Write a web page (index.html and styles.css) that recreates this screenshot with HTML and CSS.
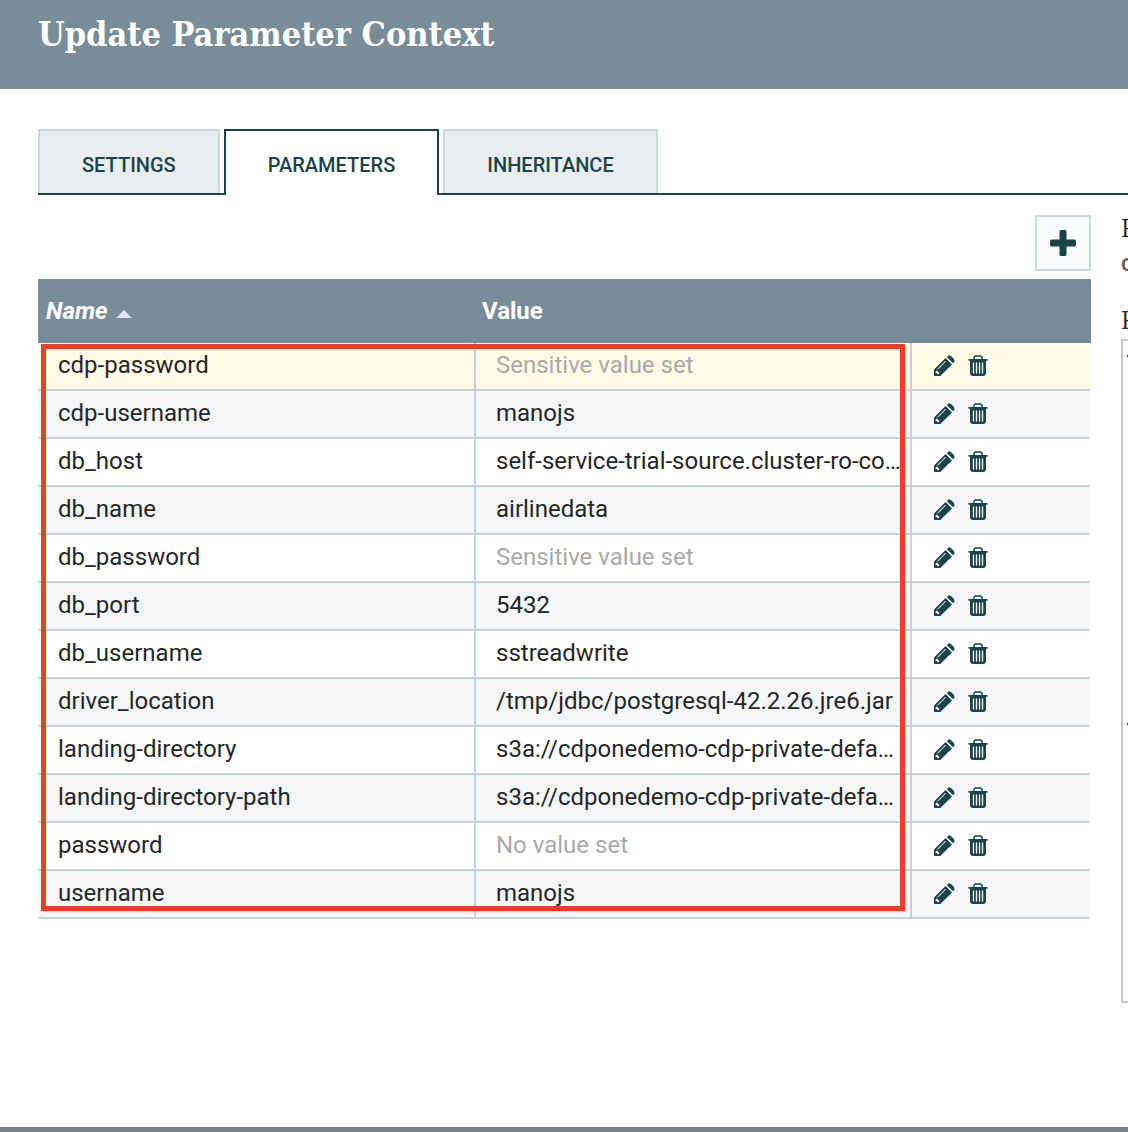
FILE: index.html
```html
<!DOCTYPE html>
<html lang="en">
<head>
<meta charset="utf-8">
<title>Update Parameter Context</title>
<link rel="stylesheet" href="styles.css">
</head>
<body>
<svg class="sprite" aria-hidden="true">
  <symbol id="pencil" viewBox="0 0 22 22">
    <path fill-rule="evenodd" d="M1 21V14.600L12.600 3 19 9.400 7.400 21ZM2.700 16.600V17.900H4.100V19.300H5.400L6.600 18.100 3.900 15.400ZM4.900 14.600 12.900 6.600 12.200 5.900 4.200 13.900Z" fill="#1b4448"/>
    <path d="M13.700 1.900 14.800 .9Q16.500-.4 18.200 1.200L20.800 3.800Q22.300 5.500 20.900 7.200L20 8.200Z" fill="#1b4448"/>
  </symbol>
  <symbol id="trash" viewBox="0 0 20 22">
    <path d="M6 4.500V3Q6 1 8 1H12Q14 1 14 3V4.500" fill="none" stroke="#1b4448" stroke-width="1.500"/>
    <path d="M.5 4H19.500V5.700H18V18Q18 21 15 21H5Q2 21 2 18V5.700H.5Z" fill="#1b4448"/>
    <path d="M5.500 7.500V18.500M8.500 7.500V18.500M11.500 7.500V18.500M14.500 7.500V18.500" stroke="#fff" stroke-width="1.300"/>
  </symbol>
</svg>
<div class="dialog">
  <header class="dialog-header"><h1>Update Parameter Context</h1></header>
  <div class="tabs" role="tablist">
    <button class="tab" role="tab">SETTINGS</button>
    <button class="tab tab-active" role="tab" aria-selected="true">PARAMETERS</button>
    <button class="tab" role="tab">INHERITANCE</button>
  </div>
  <main class="content">
    <section class="parameters">
      <div class="toolbar">
        <button class="add" aria-label="Add parameter"><svg viewBox="0 0 26 26" width="26" height="26"><path d="M11 0H15Q16.500 0 16.500 1.500V9.500H24.500Q26 9.500 26 11V15Q26 16.500 24.500 16.500H16.500V24.500Q16.500 26 15 26H11Q9.500 26 9.500 24.500V16.500H1.500Q0 16.500 0 15V11Q0 9.500 1.500 9.500H9.500V1.500Q9.500 0 11 0Z" fill="#1b4448"/></svg></button>
      </div>
      <div class="grid">
        <table>
          <colgroup><col class="col-name"><col class="col-value"><col></colgroup>
          <thead><tr><th class="sorted">Name<span class="sort-arrow"></span></th><th>Value</th><th></th></tr></thead>
          <tbody>
            <tr class="selected"><td>cdp-password</td><td class="unset">Sensitive value set</td><td class="actions"><button aria-label="Edit"><svg class="icon-edit"><use href="#pencil"/></svg></button><button aria-label="Delete"><svg class="icon-delete"><use href="#trash"/></svg></button></td></tr>
            <tr><td>cdp-username</td><td>manojs</td><td class="actions"><button aria-label="Edit"><svg class="icon-edit"><use href="#pencil"/></svg></button><button aria-label="Delete"><svg class="icon-delete"><use href="#trash"/></svg></button></td></tr>
            <tr><td>db_host</td><td>self-service-trial-source.cluster-ro-co…</td><td class="actions"><button aria-label="Edit"><svg class="icon-edit"><use href="#pencil"/></svg></button><button aria-label="Delete"><svg class="icon-delete"><use href="#trash"/></svg></button></td></tr>
            <tr><td>db_name</td><td>airlinedata</td><td class="actions"><button aria-label="Edit"><svg class="icon-edit"><use href="#pencil"/></svg></button><button aria-label="Delete"><svg class="icon-delete"><use href="#trash"/></svg></button></td></tr>
            <tr><td>db_password</td><td class="unset">Sensitive value set</td><td class="actions"><button aria-label="Edit"><svg class="icon-edit"><use href="#pencil"/></svg></button><button aria-label="Delete"><svg class="icon-delete"><use href="#trash"/></svg></button></td></tr>
            <tr><td>db_port</td><td>5432</td><td class="actions"><button aria-label="Edit"><svg class="icon-edit"><use href="#pencil"/></svg></button><button aria-label="Delete"><svg class="icon-delete"><use href="#trash"/></svg></button></td></tr>
            <tr><td>db_username</td><td>sstreadwrite</td><td class="actions"><button aria-label="Edit"><svg class="icon-edit"><use href="#pencil"/></svg></button><button aria-label="Delete"><svg class="icon-delete"><use href="#trash"/></svg></button></td></tr>
            <tr><td>driver_location</td><td>/tmp/jdbc/postgresql-42.2.26.jre6.jar</td><td class="actions"><button aria-label="Edit"><svg class="icon-edit"><use href="#pencil"/></svg></button><button aria-label="Delete"><svg class="icon-delete"><use href="#trash"/></svg></button></td></tr>
            <tr><td>landing-directory</td><td>s3a://cdponedemo-cdp-private-defa…</td><td class="actions"><button aria-label="Edit"><svg class="icon-edit"><use href="#pencil"/></svg></button><button aria-label="Delete"><svg class="icon-delete"><use href="#trash"/></svg></button></td></tr>
            <tr><td>landing-directory-path</td><td>s3a://cdponedemo-cdp-private-defa…</td><td class="actions"><button aria-label="Edit"><svg class="icon-edit"><use href="#pencil"/></svg></button><button aria-label="Delete"><svg class="icon-delete"><use href="#trash"/></svg></button></td></tr>
            <tr><td>password</td><td class="unset">No value set</td><td class="actions"><button aria-label="Edit"><svg class="icon-edit"><use href="#pencil"/></svg></button><button aria-label="Delete"><svg class="icon-delete"><use href="#trash"/></svg></button></td></tr>
            <tr><td>username</td><td>manojs</td><td class="actions"><button aria-label="Edit"><svg class="icon-edit"><use href="#pencil"/></svg></button><button aria-label="Delete"><svg class="icon-delete"><use href="#trash"/></svg></button></td></tr>
          </tbody>
        </table>
        <div class="highlight"></div>
      </div>
    </section>
    <aside class="details">
      <div class="details-label">P</div>
      <div class="details-value">c</div>
      <div class="details-label details-next">R</div>
      <div class="references"><span class="twist"></span><span class="twist"></span></div>
    </aside>
  </main>
</div>
</body>
</html>
```
FILE: styles.css
```css
* { box-sizing: border-box; }
body {
  margin: 0;
  background: #728089;
  color: #262626;
  font-family: Roboto, "Liberation Sans", sans-serif;
  font-size: 24px;
  overflow: hidden;
}
button { font: inherit; cursor: pointer; }
.sprite { display: none; }
.dialog {
  min-height: calc(100vh - 5px);
  background: #fff;
  box-shadow: 0 0 4px rgba(0, 0, 0, 0.4);
}
.dialog-header {
  height: 89px;
  padding: 12px 38px;
  background: #798d99;
}
h1 {
  margin: 0;
  color: #fff;
  font: bold 34px/44px "Roboto Slab", "DejaVu Serif Condensed", "DejaVu Serif", serif;
  white-space: nowrap;
}
.tabs {
  display: flex;
  gap: 4px;
  margin: 40px 0 0 38px;
  border-bottom: 2px solid #1b4448;
}
.tab {
  height: 64px;
  padding: 6px 42px 0;
  border: 2px solid #ccdadb;
  border-bottom: 0;
  background: #e9edf0;
  color: #1b4448;
  font-size: 20px;
  font-weight: 500;
}
.tab-active {
  height: 66px;
  margin-bottom: -2px;
  padding-bottom: 2px;
  border-color: #1b4448;
  background: #fff;
}
.content {
  display: flex;
  gap: 30px;
  padding: 20px 0 0 38px;
}
.parameters { flex: 1; min-width: 0; }
.toolbar {
  display: flex;
  justify-content: flex-end;
  padding-bottom: 8px;
}
.add {
  display: grid;
  place-items: center;
  width: 56px;
  height: 56px;
  padding: 0;
  border: 2px solid #ccdadb;
  background: #f9fafb;
}
.grid {
  position: relative;
  background: linear-gradient(#798d99 64px, #fff 64px);
}
table {
  width: calc(100% - 1px);
  table-layout: fixed;
  border-collapse: separate;
  border-spacing: 0;
}
.col-name { width: 438px; }
.col-value { width: 436px; }
th {
  height: 64px;
  padding: 0 6px;
  color: #fff;
  font-weight: 700;
  text-align: left;
}
.sorted { padding-left: 8px; font-style: italic; }
.sort-arrow {
  display: inline-block;
  margin-left: 8px;
  border: solid transparent;
  border-width: 0 8px 8px;
  border-bottom-color: #e2e8f8;
  vertical-align: 1px;
}
td {
  height: 48px;
  padding: 0 8px 2px 20px;
  border-right: 2px solid #c7d2d7;
  border-bottom: 2px solid #c7d2d7;
  line-height: 32px;
  white-space: nowrap;
}
tbody tr:nth-child(even) { background: #f4f6f7; }
tbody .selected { background: #fffbe6; }
.unset { color: #a9a9a9; }
.actions {
  padding: 0 20px;
  border-right: 0;
  line-height: 0;
}
.actions button {
  width: 24px;
  margin-right: 10px;
  padding: 0;
  border: 0;
  background: none;
}
.icon-edit { width: 22px; height: 22px; }
.icon-delete { width: 20px; height: 22px; }
.highlight {
  position: absolute;
  top: 65px;
  right: 186px;
  bottom: 8px;
  left: 3px;
  border: 5px solid #eb4025;
  pointer-events: none;
}
.details {
  flex: 0 0 7px;
  overflow: hidden;
}
.details-label {
  font: 24px/28px "Roboto Slab", "DejaVu Serif Condensed", "DejaVu Serif", serif;
}
.details-value {
  padding-top: 4px;
  color: #775351;
  font-weight: 500;
  line-height: 32px;
}
.details-next { padding-top: 28px; }
.references {
  display: grid;
  grid-template-rows: 368px 1fr;
  width: 400px;
  height: 664px;
  margin-top: 4px;
  padding: 14px 4px;
  border: 2px solid #c8c8c8;
}
.twist {
  width: 8px;
  height: 2px;
  background: #1b4448;
}
```
